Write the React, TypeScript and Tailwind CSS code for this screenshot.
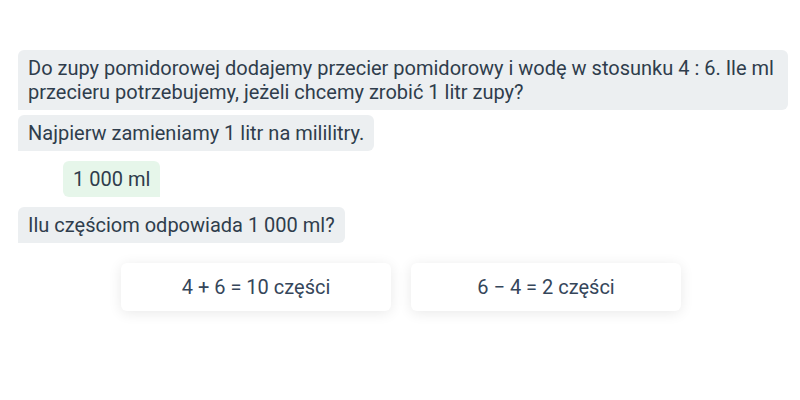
const messages = [
  {
    text: 'Do zupy pomidorowej dodajemy przecier pomidorowy i wodę w stosunku 4 : 6. Ile ml przecieru potrzebujemy, jeżeli chcemy zrobić 1 litr zupy?',
  },
  { text: 'Najpierw zamieniamy 1 litr na mililitry.' },
]

const answers = ['4 + 6 = 10 części', '6 − 4 = 2 części']

export default function App() {
  return (
    <div
      className="h-[400px] w-[800px] bg-white text-[20px] leading-6 text-[#2f3d4c]"
      style={{ fontFamily: 'Roboto, "Liberation Sans", sans-serif' }}
    >
      <div className="flex flex-col items-start pl-[18px] pr-3 pt-[50px]">
        {/* Question */}
        {messages.map((m, i) => (
          <div
            key={i}
            className={`rounded-md rounded-bl-none bg-[#eceff1] px-2.5 py-1.5 ${i > 0 ? 'mt-[5px]' : 'w-full'}`}
          >
            {m.text}
          </div>
        ))}

        {/* Student answer */}
        <div className="ml-[45px] mt-2.5 rounded-md rounded-br-none bg-[#e6f6ea] px-2.5 py-1.5">
          1 000 ml
        </div>

        <div className="mt-2.5 rounded-md rounded-bl-none bg-[#eceff1] px-2.5 py-1.5">
          Ilu częściom odpowiada 1 000 ml?
        </div>
      </div>

      {/* Choices */}
      <div className="mt-5 flex justify-center gap-5 pl-0.5">
        {answers.map((a) => (
          <button
            key={a}
            className="flex h-12 w-[270px] items-center justify-center rounded-md bg-white text-[#35465a] shadow-[0_2px_14px_rgba(0,0,0,0.09)]"
          >
            {a}
          </button>
        ))}
      </div>
    </div>
  )
}
